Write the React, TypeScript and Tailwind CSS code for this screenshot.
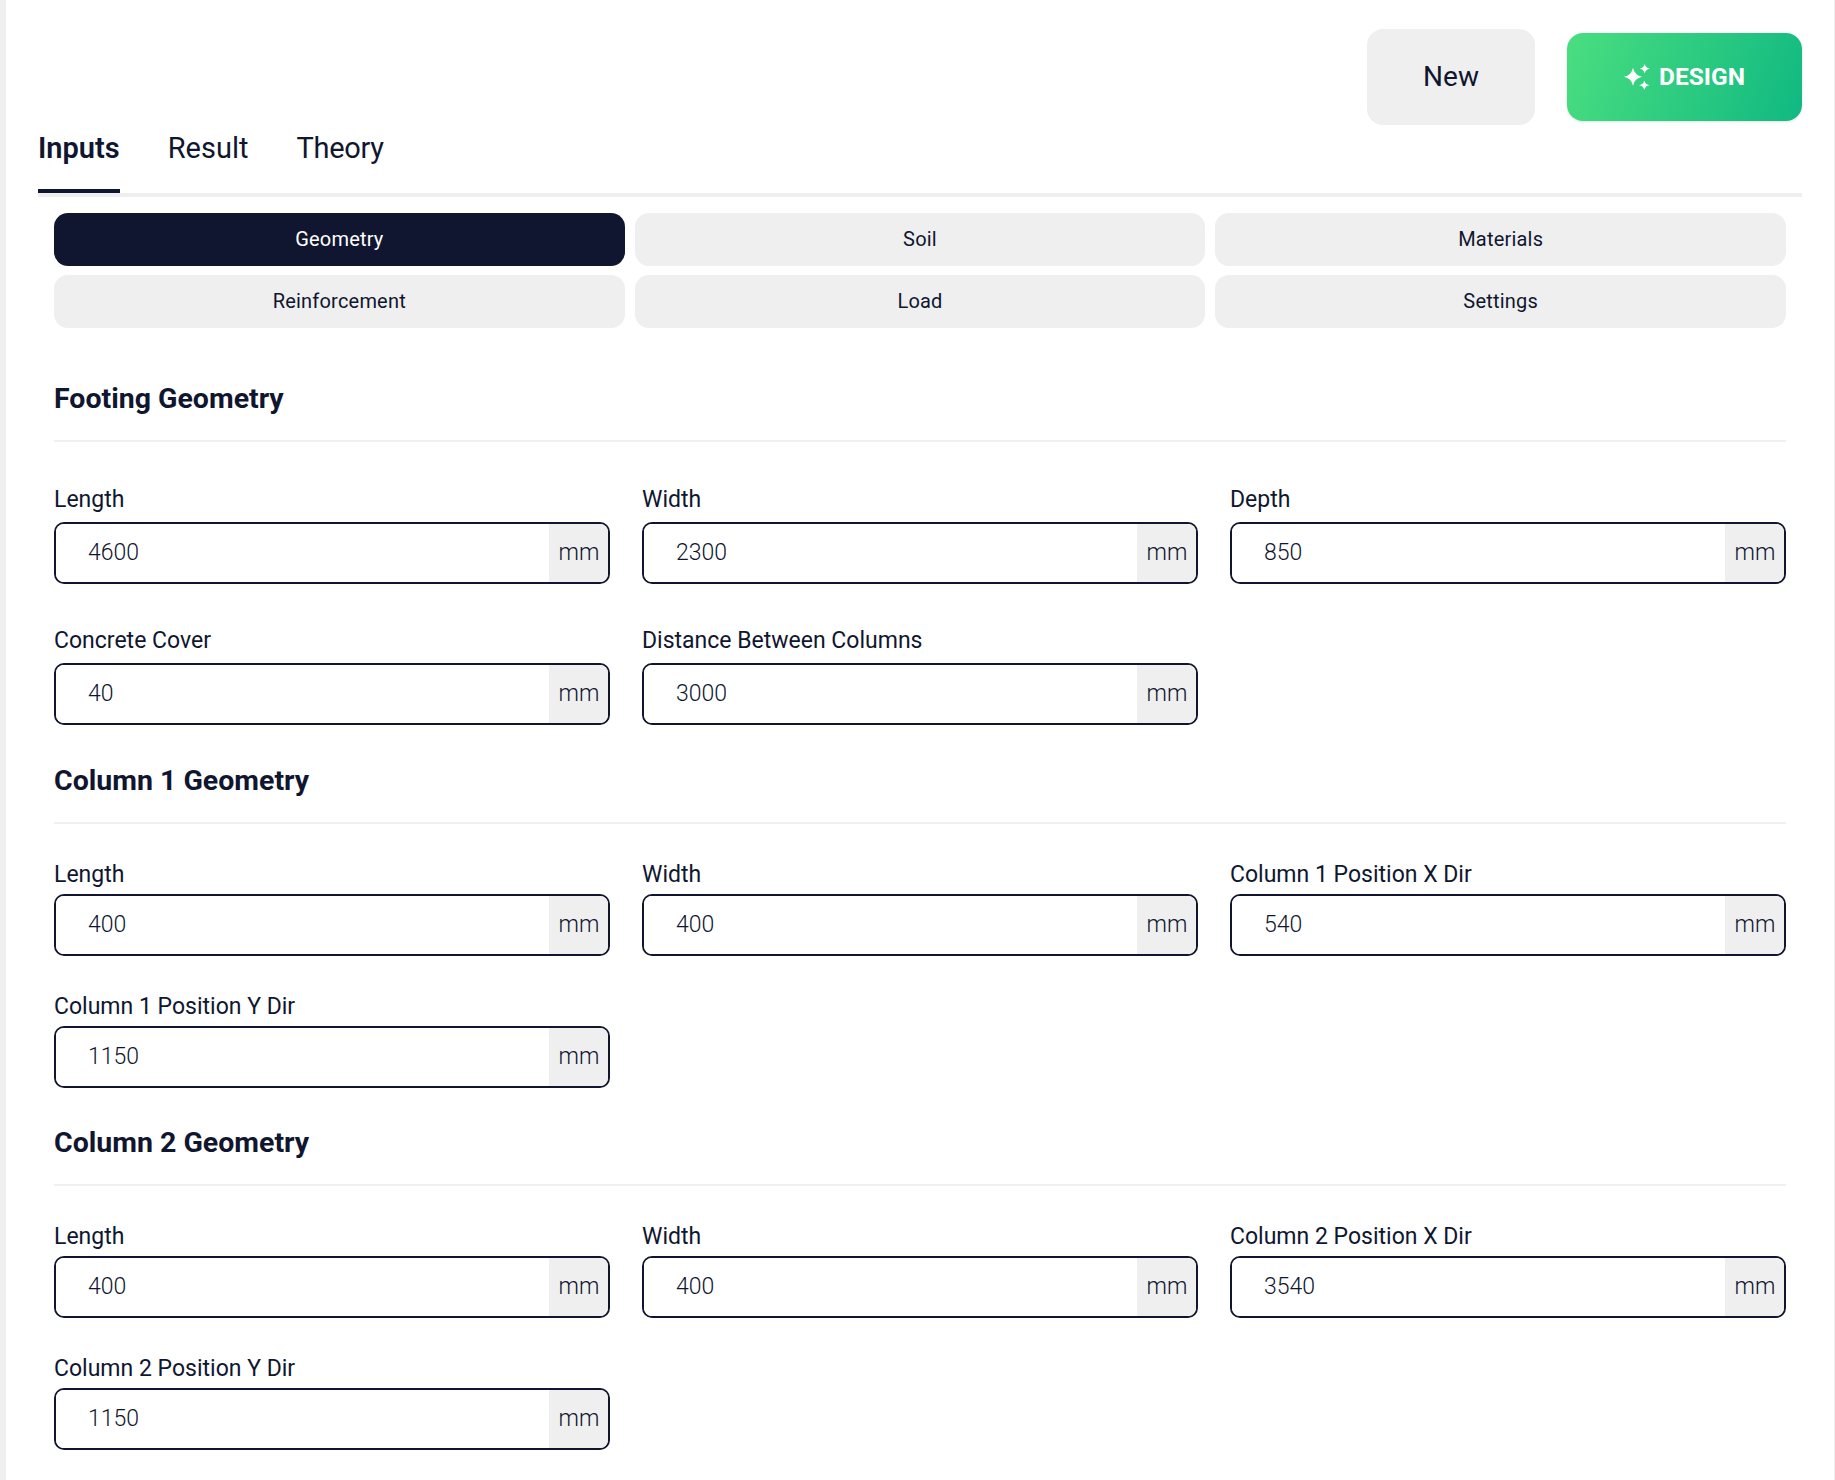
const font = "[font-family:Roboto,'Liberation_Sans',sans-serif]"

type Field = { label: string; value: string }

const subTabs = ["Geometry", "Soil", "Materials", "Reinforcement", "Load", "Settings"]

function Sparkle() {
  return (
    <svg width="26" height="26" viewBox="0 0 26 26" fill="#fff">
      <path d="M9 3.700Q10.500 11.200 18 12.700Q10.500 14.200 9 21.700Q7.500 14.200 0 12.700Q7.500 11.200 9 3.700z" />
      <path d="M20.700 0Q21.500 3.900 25.700 4.700Q21.500 5.500 20.700 9.400Q19.900 5.500 15.700 4.700Q19.900 3.900 20.700 0z" />
      <path d="M20.300 16.600Q21.100 20.500 25.500 21.300Q21.100 22.100 20.300 26Q19.500 22.100 15.100 21.300Q19.500 20.500 20.300 16.600z" />
    </svg>
  )
}

function InputField({ label, value, labelGap }: Field & { labelGap: string }) {
  return (
    <div>
      <div className={`h-[28px] text-[23px] leading-[30px] text-[#10162f] ${labelGap}`}>{label}</div>
      <div className="flex h-[62px] overflow-hidden rounded-[10px] border-2 border-[#10162f]">
        <input
          readOnly
          defaultValue={value}
          className="min-w-0 flex-1 bg-white pl-[32px] text-[23px] font-light text-[#10162f] outline-none"
        />
        <span className="flex w-[59px] items-center justify-center bg-[#efefef] pl-[1px] text-[23px] font-light text-[#10162f]">mm</span>
      </div>
    </div>
  )
}

function Section(props: { title: string; gridTop: string; labelGap: string; rowGap: string; fields: Field[] }) {
  return (
    <section>
      <h2 className="h-[40px] text-[28.5px] leading-[40px] font-bold text-[#10162f]">{props.title}</h2>
      <div className="mt-[21px] h-[2px] bg-[#efefef]" />
      <div className={`grid grid-cols-3 gap-x-[32px] ${props.gridTop} ${props.rowGap}`}>
        {props.fields.map((f) => (
          <InputField key={f.label} labelGap={props.labelGap} {...f} />
        ))}
      </div>
    </section>
  )
}

export default function App() {
  return (
    <div className={`flex h-[1480px] w-[1835px] bg-[#efefef] ${font}`}>
      <main className="ml-[6px] mr-[1px] flex-1 bg-white pl-[32px] pr-[32px]">
        <div className="flex h-[125px] items-center justify-end gap-[32px] pt-[29px]">
          <button className="h-[96px] w-[168px] rounded-[16px] bg-[#efefef] text-[28px] text-[#10162f]">New</button>
          <button className="flex h-[88px] w-[235px] items-center justify-center gap-[9px] rounded-[16px] bg-[linear-gradient(110deg,#4ade80,#10b981)] text-[24.5px] font-bold text-white shadow-sm">
            <Sparkle />
            DESIGN
          </button>
        </div>

        <div className="flex h-[72px] gap-[48px] border-b-4 border-[#efefef]">
          <div className="h-[68px] border-b-4 border-[#10162f] pt-[5px] text-[29px] leading-[36px] font-semibold text-[#10162f]">
            Inputs
          </div>
          <div className="pt-[5px] text-[29px] leading-[36px] text-[#10162f]">Result</div>
          <div className="pt-[5px] text-[29px] leading-[36px] tracking-[-0.3px] text-[#10162f]">Theory</div>
        </div>

        <div className="px-[16px]">
          <div className="mt-[16px] grid grid-cols-3 gap-x-[10px] gap-y-[9px]">
            {subTabs.map((t, i) => (
              <div
                key={t}
                className={
                  i === 0
                    ? "flex h-[53px] items-center justify-center rounded-[14px] bg-[#10162f] pb-[1px] text-[20px] tracking-[0.2px] text-white"
                    : "flex h-[53px] items-center justify-center rounded-[14px] bg-[#efefef] pb-[1px] text-[20px] tracking-[0.2px] text-[#10162f]"
                }
              >
                {t}
              </div>
            ))}
          </div>

          <div className="mt-[51px]">
            <Section
              title="Footing Geometry"
              gridTop="mt-[43px]"
              labelGap="mb-[9px]"
              rowGap="gap-y-[42px]"
              fields={[
                { label: "Length", value: "4600" },
                { label: "Width", value: "2300" },
                { label: "Depth", value: "850" },
                { label: "Concrete Cover", value: "40" },
                { label: "Distance Between Columns", value: "3000" },
              ]}
            />
          </div>
          <div className="mt-[36px]">
            <Section
              title="Column 1 Geometry"
              gridTop="mt-[36px]"
              labelGap="mb-[6px]"
              rowGap="gap-y-[36px]"
              fields={[
                { label: "Length", value: "400" },
                { label: "Width", value: "400" },
                { label: "Column 1 Position X Dir", value: "540" },
                { label: "Column 1 Position Y Dir", value: "1150" },
              ]}
            />
          </div>
          <div className="mt-[35px]">
            <Section
              title="Column 2 Geometry"
              gridTop="mt-[36px]"
              labelGap="mb-[6px]"
              rowGap="gap-y-[36px]"
              fields={[
                { label: "Length", value: "400" },
                { label: "Width", value: "400" },
                { label: "Column 2 Position X Dir", value: "3540" },
                { label: "Column 2 Position Y Dir", value: "1150" },
              ]}
            />
          </div>
        </div>
      </main>
    </div>
  )
}
